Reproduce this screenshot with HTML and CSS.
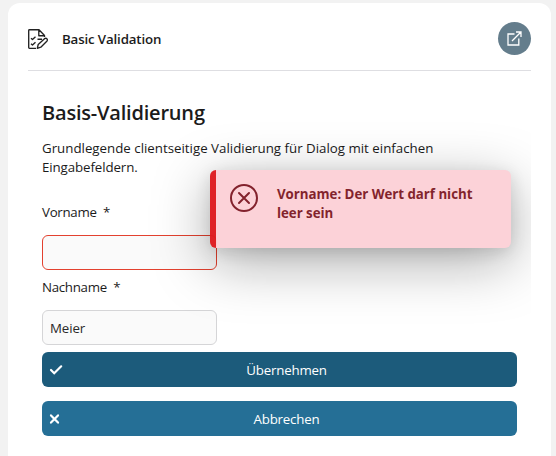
FILE: index.html
```html
<!DOCTYPE html>
<html lang="de">
<head>
<meta charset="utf-8">
<title>Basic Validation</title>
<link rel="stylesheet" href="styles.css">
</head>
<body>
<main class="card">
  <header class="card-header">
    <svg class="doc-icon" width="20" height="20" viewBox="0 0 20 20" aria-hidden="true">
      <path d="M8 19.3H1.5Q.7 19.3.7 18.5V1.5Q.7.7 1.5.7H11L16.5 6.5V8M10.8.9V6.7H16.3M3 9.2L4.5 10.5L7.5 7.8M3 14.7L4.5 16L7.5 13.3M9.5 10.2H14M9.3 19.3L10.2 15.5L16.5 9.7Q18 8.8 19 9.9Q19.8 11 18.8 12.2L12.8 18.2Z"/>
    </svg>
    <h1 class="card-title">Basic Validation</h1>
    <button class="open-button" aria-label="Öffnen">
      <svg width="15" height="15" viewBox="0 0 15 15"><path d="M7.5 3H1V14H11.8V7.5M9 1H14V6M13.7 1.3L5 10"/></svg>
    </button>
  </header>
  <section class="content">
    <h2 class="heading">Basis-Validierung</h2>
    <p class="intro"><span class="line-one">Grundlegende clientseitige Validierung für Dialog mit einfachen</span><br><span class="line-two">Eingabefeldern.</span></p>
    <form class="form">
      <label class="label label-first" for="first">Vorname&nbsp; *</label>
      <input class="field field-invalid" id="first" type="text">
      <label class="label label-last" for="last">Nachname&nbsp; *</label>
      <input class="field" id="last" type="text" value="Meier">
      <button class="button button-submit" type="button">
        <svg class="button-icon" width="14" height="12" viewBox="0 0 14 12"><path d="M2 6L5.2 9.2L12.2 2.3"/></svg><span>Übernehmen</span>
      </button>
      <button class="button button-cancel" type="button">
        <svg class="button-icon" width="14" height="12" viewBox="0 0 14 12"><path d="M2 2.4L9 9.6M9 2.4L2 9.6"/></svg><span>Abbrechen</span>
      </button>
    </form>
    <div class="toast" role="alert">
      <svg class="toast-icon" width="28" height="28" viewBox="0 0 28 28"><circle cx="14" cy="14" r="13"/><path d="M9 9L19 19M19 9L9 19"/></svg>
      <p class="toast-text">Vorname: Der Wert darf nicht<br>leer sein</p>
    </div>
  </section>
</main>
</body>
</html>
```
FILE: styles.css
```css
* { box-sizing: border-box; }
body {
  margin: 0;
  height: 456px;
  padding: 3px 5px 0 8px;
  overflow: hidden;
  background: #f2f2f2;
  color: #1b1b1b;
  font-family: "Open Sans", "Noto Sans", sans-serif;
}
h1, h2, p { margin: 0; }
.card {
  height: 453px;
  padding: 0 20px;
  border-radius: 12px 12px 0 0;
  background: #fff;
}
.card-header {
  display: flex;
  align-items: center;
  height: 68px;
  padding-top: 4px;
  border-bottom: 1px solid #dedee2;
}
.doc-icon { fill: none; stroke: #222; stroke-width: 1.35; stroke-linejoin: round; }
.card-title {
  flex: 1;
  margin-left: 14px;
  font-size: 13.3px;
  font-weight: 600;
  letter-spacing: -0.15px;
}
.open-button {
  display: grid;
  place-items: center;
  width: 33px;
  height: 33px;
  padding: 0;
  border: 0;
  border-radius: 50%;
  background: #647d8c;
}
.open-button svg { fill: none; stroke: #fff; stroke-width: 1.3; }
.content {
  position: relative;
  height: 385px;
  padding: 28px 14px 0;
  overflow: hidden;
}
.heading {
  line-height: 28px;
  font-size: 20px;
  font-weight: 600;
  letter-spacing: -0.2px;
}
.intro {
  margin-top: 12px;
  font-size: 13.3px;
  line-height: 19px;
}
.line-two { letter-spacing: -0.1px; }
.form { display: flex; flex-direction: column; align-items: flex-start; }
.label { font-size: 13.3px; line-height: 19px; letter-spacing: -0.3px; }
.label-first { margin-top: 26px; }
.label-last { margin-top: 8px; }
.field {
  width: 175px;
  height: 35px;
  margin-top: 13px;
  padding: 0 7px;
  border: 1px solid #d5d5d7;
  border-radius: 6px;
  background: #fafafa;
  color: #292929;
  font: 13.3px "Open Sans", sans-serif;
  letter-spacing: -0.1px;
}
.field-invalid { border-color: #e3412f; }
.button {
  position: relative;
  display: flex;
  align-items: center;
  justify-content: center;
  width: 475px;
  height: 35px;
  padding: 0 0 0 14px;
  border: 0;
  border-radius: 6px;
  color: #fff;
  font: 13.3px "Open Sans", sans-serif;
  letter-spacing: -0.2px;
}
.button-submit { margin-top: 7px; background: #1c5b7b; }
.button-cancel { margin-top: 14px; background: #256f96; }
.button-icon {
  position: absolute;
  left: 7px;
  top: 12px;
  fill: none;
  stroke: #fff;
  stroke-width: 2.2;
  stroke-linecap: round;
}
.toast {
  position: absolute;
  left: 182px;
  top: 99px;
  display: flex;
  width: 301px;
  height: 78px;
  padding: 14px 14px 0;
  border-left: 6px solid #de1a1f;
  border-radius: 6px;
  background: #fcd1d7;
  color: #7e1a25;
  box-shadow: 0 14px 56px rgba(0, 0, 0, .34), 0 4px 16px rgba(0, 0, 0, .12);
  opacity: .96;
}
.toast-icon { flex: none; fill: none; stroke: #7e1a25; stroke-width: 2; stroke-linecap: round; }
.toast-text {
  margin: 1px 0 0 19px;
  font-size: 13.3px;
  font-weight: 700;
  line-height: 19px;
  letter-spacing: -0.03px;
  white-space: nowrap;
}
```
